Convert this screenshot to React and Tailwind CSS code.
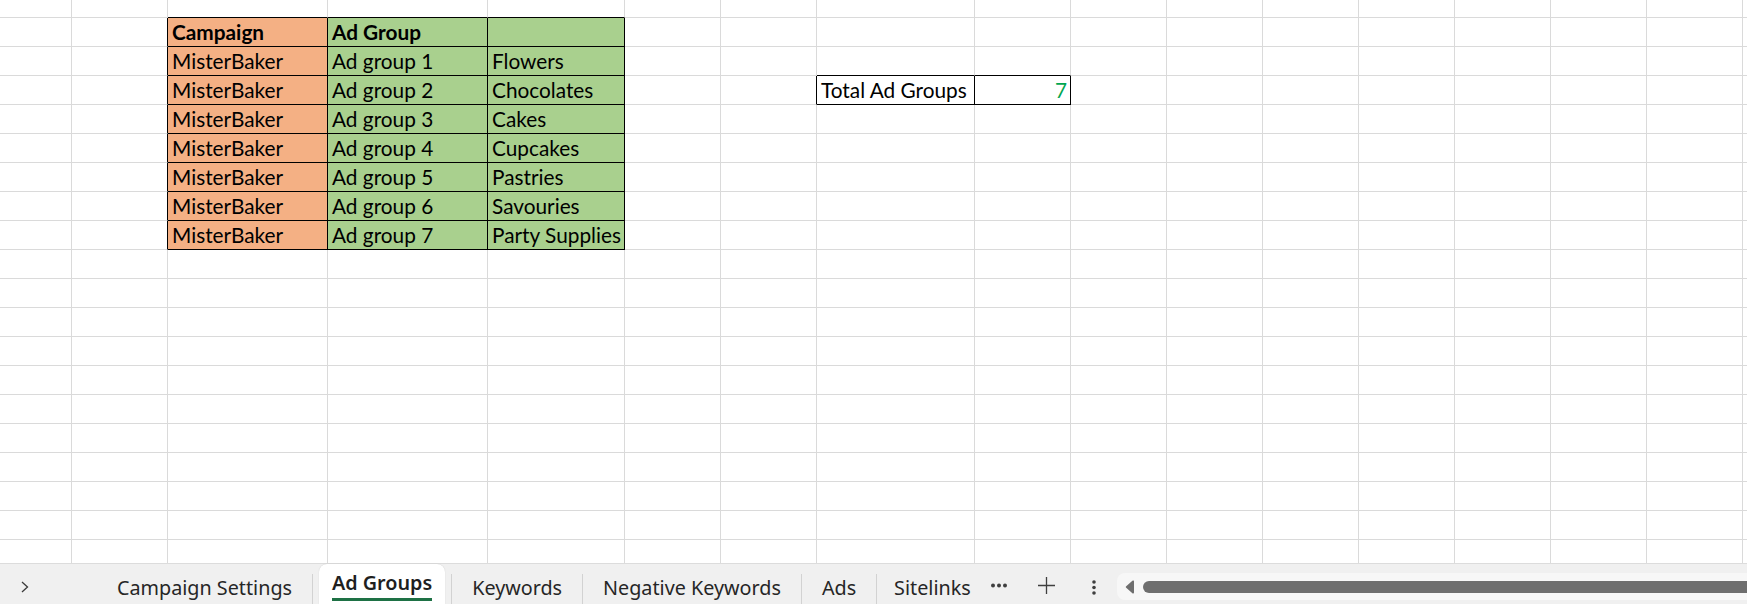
import React from 'react';

// column widths include the 1px right gridline
const COLS = [72, 96, 160, 160, 137, 96, 96, 158, 96, 96, 96, 96, 96, 96, 96, 96, 96];
const ROWS = 20;

const ORANGE = 'bg-[#f4b084]';
const GREEN = 'bg-[#a9d08e]';

const CELLS = {
  '1-2': { text: 'Campaign', bold: true, fill: ORANGE },
  '1-3': { text: 'Ad Group', bold: true, fill: GREEN },
  '1-4': { text: '', fill: GREEN },
  '3-7': { text: 'Total Ad Groups' },
  '3-8': { text: '7', right: true, green: true },
};

const GROUPS = ['Flowers', 'Chocolates', 'Cakes', 'Cupcakes', 'Pastries', 'Savouries', 'Party Supplies'];
GROUPS.forEach((g, i) => {
  const r = i + 2;
  CELLS[`${r}-2`] = { text: 'MisterBaker', fill: ORANGE };
  CELLS[`${r}-3`] = { text: `Ad group ${i + 1}`, fill: GREEN };
  CELLS[`${r}-4`] = { text: g, fill: GREEN };
});

const boxed = (r, c) =>
  (r >= 1 && r <= 8 && c >= 2 && c <= 4) || (r === 3 && (c === 7 || c === 8));

function Cell({ r, c }) {
  const cell = CELLS[`${r}-${c}`];
  const right = boxed(r, c) || boxed(r, c + 1) ? 'border-r-black' : 'border-r-[#dadada]';
  const bottom = boxed(r, c) || boxed(r + 1, c) ? 'border-b-black' : 'border-b-[#dadada]';
  return (
    <div className={`border-r border-b ${right} ${bottom} ${cell?.fill || 'bg-white'} overflow-hidden whitespace-nowrap`}>
      {cell && cell.text && (
        <div
          className={`pl-[4px] font-['Lato',sans-serif] text-[20.8px] leading-[28px] ${
            cell.bold ? 'font-bold' : ''
          } ${cell.right ? 'text-right pr-[3px]' : ''} ${cell.green ? 'text-[#00a650]' : 'text-black'}`}
        >
          {cell.text}
        </div>
      )}
    </div>
  );
}

function Sep() {
  return <div className="w-px mt-[10px] bg-[#d2d2d2] shrink-0" />;
}

function Tab({ label }) {
  return (
    <div className="px-5 flex items-end pb-[3px] text-[19.75px] leading-[26px] text-[#262626] whitespace-nowrap">
      {label}
    </div>
  );
}

export default function App() {
  return (
    <div className="w-[1747px] h-[604px] overflow-hidden bg-white flex flex-col font-['Noto_Sans',sans-serif]">
      <div className="h-[563px] overflow-hidden shrink-0">
        <div className="grid grid-cols-[72px_96px_160px_160px_137px_96px_96px_158px_96px_96px_96px_96px_96px_96px_96px_96px_96px] grid-rows-[18px_repeat(19,29px)]">
          {Array.from({ length: ROWS }).map((_, r) =>
            COLS.map((_, c) => <Cell key={`${r}-${c}`} r={r} c={c} />)
          )}
        </div>
      </div>

      <div className="h-[41px] shrink-0 flex border-t border-[#dcdcdc] bg-[#f0f0f0]">
        <div className="w-[97px] shrink-0 pl-[21px] pt-[17px]">
          <svg width="8" height="12" viewBox="0 0 8 12" fill="none">
            <path d="M1 1l5.5 5L1 11" stroke="#3a3a3a" strokeWidth="1.3" />
          </svg>
        </div>
        <Tab label="Campaign Settings" />
        <Sep />
        <div className="px-[6px] flex">
          <div className="bg-white rounded-t-[8px] px-[13px] flex flex-col justify-end shadow-[0_0_1px_rgba(0,0,0,0.2)]">
            <span className="text-[19.75px] leading-[26px] font-semibold text-[#1f1f1f] whitespace-nowrap">Ad Groups</span>
            <div className="h-[3px] bg-[#1e7145] mt-[2px] mb-[3px]" />
          </div>
        </div>
        <Sep />
        <Tab label="Keywords" />
        <Sep />
        <Tab label="Negative Keywords" />
        <Sep />
        <Tab label="Ads" />
        <Sep />
        <div className="pl-[17px] flex items-end pb-[3px] text-[19.75px] leading-[26px] text-[#262626] whitespace-nowrap">
          Sitelinks
        </div>
        <div className="ml-5 flex items-center pt-[2px]">
          <svg width="16" height="5" viewBox="0 0 16 5">
            <circle cx="2" cy="2.5" r="2" fill="#3f3f3f" />
            <circle cx="8" cy="2.5" r="2" fill="#3f3f3f" />
            <circle cx="14" cy="2.5" r="2" fill="#3f3f3f" />
          </svg>
        </div>
        <div className="ml-[31px] flex items-center pt-[2px]">
          <svg width="17" height="17" viewBox="0 0 17 17">
            <path d="M8.5 0v17M0 8.5h17" stroke="#3f3f3f" strokeWidth="1.3" />
          </svg>
        </div>
        <div className="ml-[37px] flex items-center pt-[6px]">
          <svg width="4" height="15" viewBox="0 0 4 15">
            <circle cx="2" cy="2" r="1.8" fill="#3f3f3f" />
            <circle cx="2" cy="7.5" r="1.8" fill="#3f3f3f" />
            <circle cx="2" cy="13" r="1.8" fill="#3f3f3f" />
          </svg>
        </div>
        <div className="ml-[21px] flex-1 mt-[9px] mb-[4px] bg-[#f7f7f7] rounded-l-[8px] flex items-center pl-[8px]">
          <svg width="10" height="14" viewBox="0 0 10 14">
            <path d="M9 1.5v11a1 1 0 0 1-1.6.8L1.2 7.8a1 1 0 0 1 0-1.6l6.2-5.5A1 1 0 0 1 9 1.5z" fill="#6e6e6e" />
          </svg>
          <div className="ml-[8px] flex-1 h-[12px] rounded-l-full bg-[#6e6e6e]" />
        </div>
      </div>
    </div>
  );
}
